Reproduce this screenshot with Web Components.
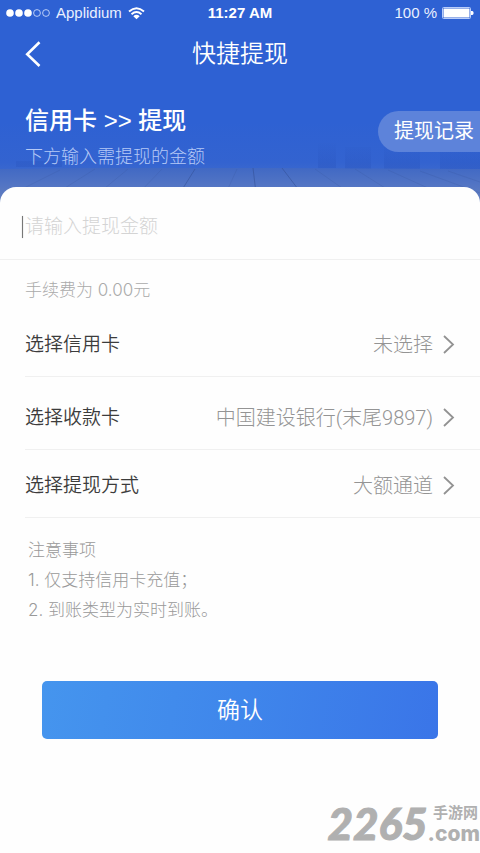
<!DOCTYPE html>
<html lang="zh-CN">
<head>
<meta charset="utf-8">
<meta name="viewport" content="width=device-width, initial-scale=1">
<title>快捷提现</title>
<style>
body { margin: 0; background: #fefefe; font-family: Inter, "Noto Sans CJK SC", sans-serif; font-weight: 300; }
</style>
</head>
<body>
<withdraw-page></withdraw-page>
<script>
const define = (name, html, setup) => {
  customElements.define(name, class extends HTMLElement {
    constructor() {
      super();
      const t = document.createElement('template');
      t.innerHTML = html;
      this.attachShadow({ mode: 'open' }).append(t.content.cloneNode(true));
    }
    connectedCallback() { if (setup) setup(this.shadowRoot, this); }
  });
};

define('status-bar', `
<style>
:host { display: grid; grid-template-columns: 1fr auto 1fr; align-items: center; height: 26px; padding: 0 6px; color: #fff; font: 400 15px/26px "Liberation Sans", Arial, sans-serif; }
.side { display: flex; align-items: center; gap: 6px; color: #e9f0ff; }
.end { justify-content: flex-end; gap: 5px; }
svg { display: block; }
b { font-size: 15px; }
</style>
<div class="side">
  <svg width="44" height="10" viewBox="0 0 44 10" fill="#fff" aria-hidden="true"><circle cx="4" cy="5" r="3.8"/><circle cx="13" cy="5" r="3.8"/><circle cx="22" cy="5" r="3.8"/><g fill="none" stroke="#dce7ff" stroke-width=".8"><circle cx="31" cy="5" r="3.4"/><circle cx="40" cy="5" r="3.4"/></g></svg>
  <span>Applidium</span>
  <svg width="17" height="13" viewBox="0 0 17 13" fill="none" stroke="#fff" stroke-width="1.9" aria-hidden="true"><path d="M1 4.5Q8.500-2 16 4.500M3.500 7.200Q8.500 3 13.500 7.200"/><path d="M5.300 9.200Q8.500 6.500 11.700 9.200L8.500 12.300Z" fill="#fff" stroke="none"/></svg>
</div>
<b>11:27 AM</b>
<div class="side end"><span>100 %</span>
  <svg width="32" height="12" viewBox="0 0 32 12" aria-hidden="true"><rect x=".5" y=".5" width="28" height="11" rx="1" fill="none" stroke="#b9cdfa"/><rect x="1.500" y="1.500" width="26" height="9" fill="#fff"/><path d="M29 4h1.500l1 1v2l-1 1H29z" fill="#fff"/></svg>
</div>`);

define('nav-bar', `
<style>
:host { display: grid; grid-template-columns: 48px 1fr 48px; align-items: center; height: 56px; padding: 0 8px; color: #fff; }
button { background: none; border: 0; padding: 0 0 0 16px; display: flex; cursor: pointer; }
h1 { margin: 0; font-size: 24px; line-height: 34px; font-weight: 350; text-align: center; }
</style>
<button type="button" aria-label="返回"><svg width="18" height="28" viewBox="0 0 18 28" fill="none" stroke="#fff" stroke-width="2.600"><path d="M15.500 2.200 3.200 14.200 15.500 26"/></svg></button>
<h1><slot></slot></h1>`);

define('hero-banner', `
<style>
:host { display: block; position: relative; background: linear-gradient(#2e61d3 0, #2e61d3 60%, #3363d0 80%, #5578c8 100%); padding-bottom: 29px; color: #fff; }
.scene { position: absolute; inset: auto 0 0; width: 100%; height: 64px; }
.content { position: relative; }
.row { display: flex; justify-content: space-between; align-items: flex-start; padding: 22px 0 0 25px; }
h2 { margin: 0; font: 500 24px/34px "Liberation Sans", "Noto Sans CJK SC", sans-serif; white-space: pre; }
p { margin: 2px 0 0; font-size: 18px; line-height: 34px; color: #b5c9f6; }
.log { margin-top: 7px; border: 0; border-radius: 21px 0 0 21px; background: #5d83da; color: #fff; padding: 0 6px 0 16px; font: inherit; font-size: 20px; line-height: 41px; font-weight: 400; cursor: pointer; }
</style>
<svg class="scene" viewBox="0 0 480 64" preserveAspectRatio="none" aria-hidden="true">
  <defs><linearGradient id="w" x2="0" y2="1"><stop stop-color="#4169c4"/><stop offset=".5" stop-color="#5375c4"/><stop offset="1" stop-color="#6681bd"/></linearGradient>
  <linearGradient id="s" x2="0" y2="1"><stop stop-color="#254fb8" stop-opacity="0"/><stop offset="1" stop-color="#254fb8" stop-opacity=".3"/></linearGradient></defs>
  <path fill="url(#s)" d="M16 22h46v6H16zM318 4h18v25h-18zM345 8h26v22h-26zM384 2h36v28h-36zM440 7h40v23h-40z"/>
  <path fill="url(#w)" d="M0 30 90 29H270L480 30V64H0z"/>
  <g stroke="#304b8f" fill="none"><path stroke-opacity=".5" d="M195 30 180 54M253 29 256 54M282 29 301 54"/><path stroke-opacity=".18" d="M237 30 226 54M315 30 349 54M162 30 139 54M128 30 99 54M95 30 57 54M60 31 14 54M355 30 393 54M388 31 439 54M420 32 480 54M448 32 480 43"/></g>
</svg>
<div class="content">
  <slot name="top"></slot>
  <div class="row"><div><h2><slot name="title"></slot></h2><p><slot name="subtitle"></slot></p></div><button class="log" type="button"><slot name="action"></slot></button></div>
</div>`);

define('amount-field', `
<style>
:host { display: flex; align-items: center; height: 73px; padding: 8px 22px 0; box-sizing: border-box; border-bottom: 1px solid #f0f0f0; }
i { width: 1px; height: 22px; background: #777; box-shadow: 0 0 1px #999; }
input { flex: 1; min-width: 0; border: 0; outline: 0; background: none; padding: 0 0 0 2px; font: inherit; font-size: 19px; line-height: 32px; height: 32px; color: #444; caret-color: transparent; }
input::placeholder { color: #d4d4d4; opacity: 1; }
</style>
<i></i><input type="text" inputmode="decimal">`, (root, host) => {
  const input = root.querySelector('input');
  input.placeholder = host.getAttribute('hint');
  input.setAttribute('aria-label', host.getAttribute('hint'));
});

define('option-row', `
<style>
:host { display: block; margin-left: 25px; border-bottom: 1px solid #f0f0f0; }
button { display: flex; align-items: center; width: 100%; border: 0; background: none; padding: 20px 25px 15px 0; font: inherit; font-size: 19px; line-height: 32px; color: #3c3c3c; text-align: left; cursor: pointer; }
:host([roomy]) button { padding-top: 25px; }
.label { flex: 1; font-weight: 350; }
.value { color: #949494; margin-right: 10px; font-family: Roboto, "Noto Sans CJK SC", sans-serif; font-size: 20px; }
</style>
<button type="button"><span class="label"><slot name="label"></slot></span><span class="value"><slot></slot></span>
<svg width="12" height="20" viewBox="0 0 12 20" fill="none" stroke="#929292" stroke-width="1.800" aria-hidden="true"><path d="M1 1 10 9.500 1 18"/></svg></button>`);

define('notice-list', `
<style>
:host { display: block; padding: 17px 28px 0; font-size: 17px; line-height: 30px; color: #999; }
</style><slot></slot>`);

define('primary-button', `
<style>
:host { display: block; padding: 56px 42px 0; }
button { display: block; width: 100%; height: 58px; border: 0; border-radius: 5px; background: linear-gradient(100deg, #4595ee, #3f86eb 50%, #3a75e8); color: #fff; font: inherit; font-size: 23px; font-weight: 350; padding: 0 0 4px; cursor: pointer; }
</style><button type="button"><slot></slot></button>`);

define('site-mark', `
<style>
:host { position: absolute; right: 0; bottom: 8px; display: flex; align-items: flex-end; color: #b0b0b0; }
.num { font: italic 900 44px/44px Lato, sans-serif; -webkit-text-stroke: 1px #b0b0b0; }
.side { display: flex; flex-direction: column; align-items: flex-end; }
.cn { font: 700 15px/22px "Noto Sans CJK SC", sans-serif; padding-right: 2px; }
.com { font: 800 21px/22px Inter, sans-serif; }
</style><span class="num">2265</span><span class="side"><span class="cn">手游网</span><span class="com">.com</span></span>`);

define('withdraw-page', `
<style>
:host { display: block; position: relative; min-height: 100vh; overflow: hidden; }
main { position: relative; margin-top: -16px; border-radius: 16px 16px 0 0; background: #fefefe; padding-bottom: 112px; }
.fee { padding: 14px 25px 3px; font-size: 17px; line-height: 32px; color: #aaa; }
</style>
<hero-banner>
  <div slot="top"><status-bar></status-bar><nav-bar>快捷提现</nav-bar></div>
  <span slot="title">信用卡 &gt;&gt; 提现</span>
  <span slot="subtitle">下方输入需提现的金额</span>
  <span slot="action">提现记录</span>
</hero-banner>
<main>
  <amount-field hint="请输入提现金额"></amount-field>
  <div class="fee">手续费为 0.00元</div>
  <option-row><span slot="label">选择信用卡</span>未选择</option-row>
  <option-row roomy><span slot="label">选择收款卡</span>中国建设银行(末尾9897)</option-row>
  <option-row><span slot="label">选择提现方式</span>大额通道</option-row>
  <notice-list><div>注意事项</div><div>1. 仅支持信用卡充值；</div><div>2. 到账类型为实时到账。</div></notice-list>
  <primary-button>确认</primary-button>
</main>
<site-mark></site-mark>`);
</script>
</body>
</html>
